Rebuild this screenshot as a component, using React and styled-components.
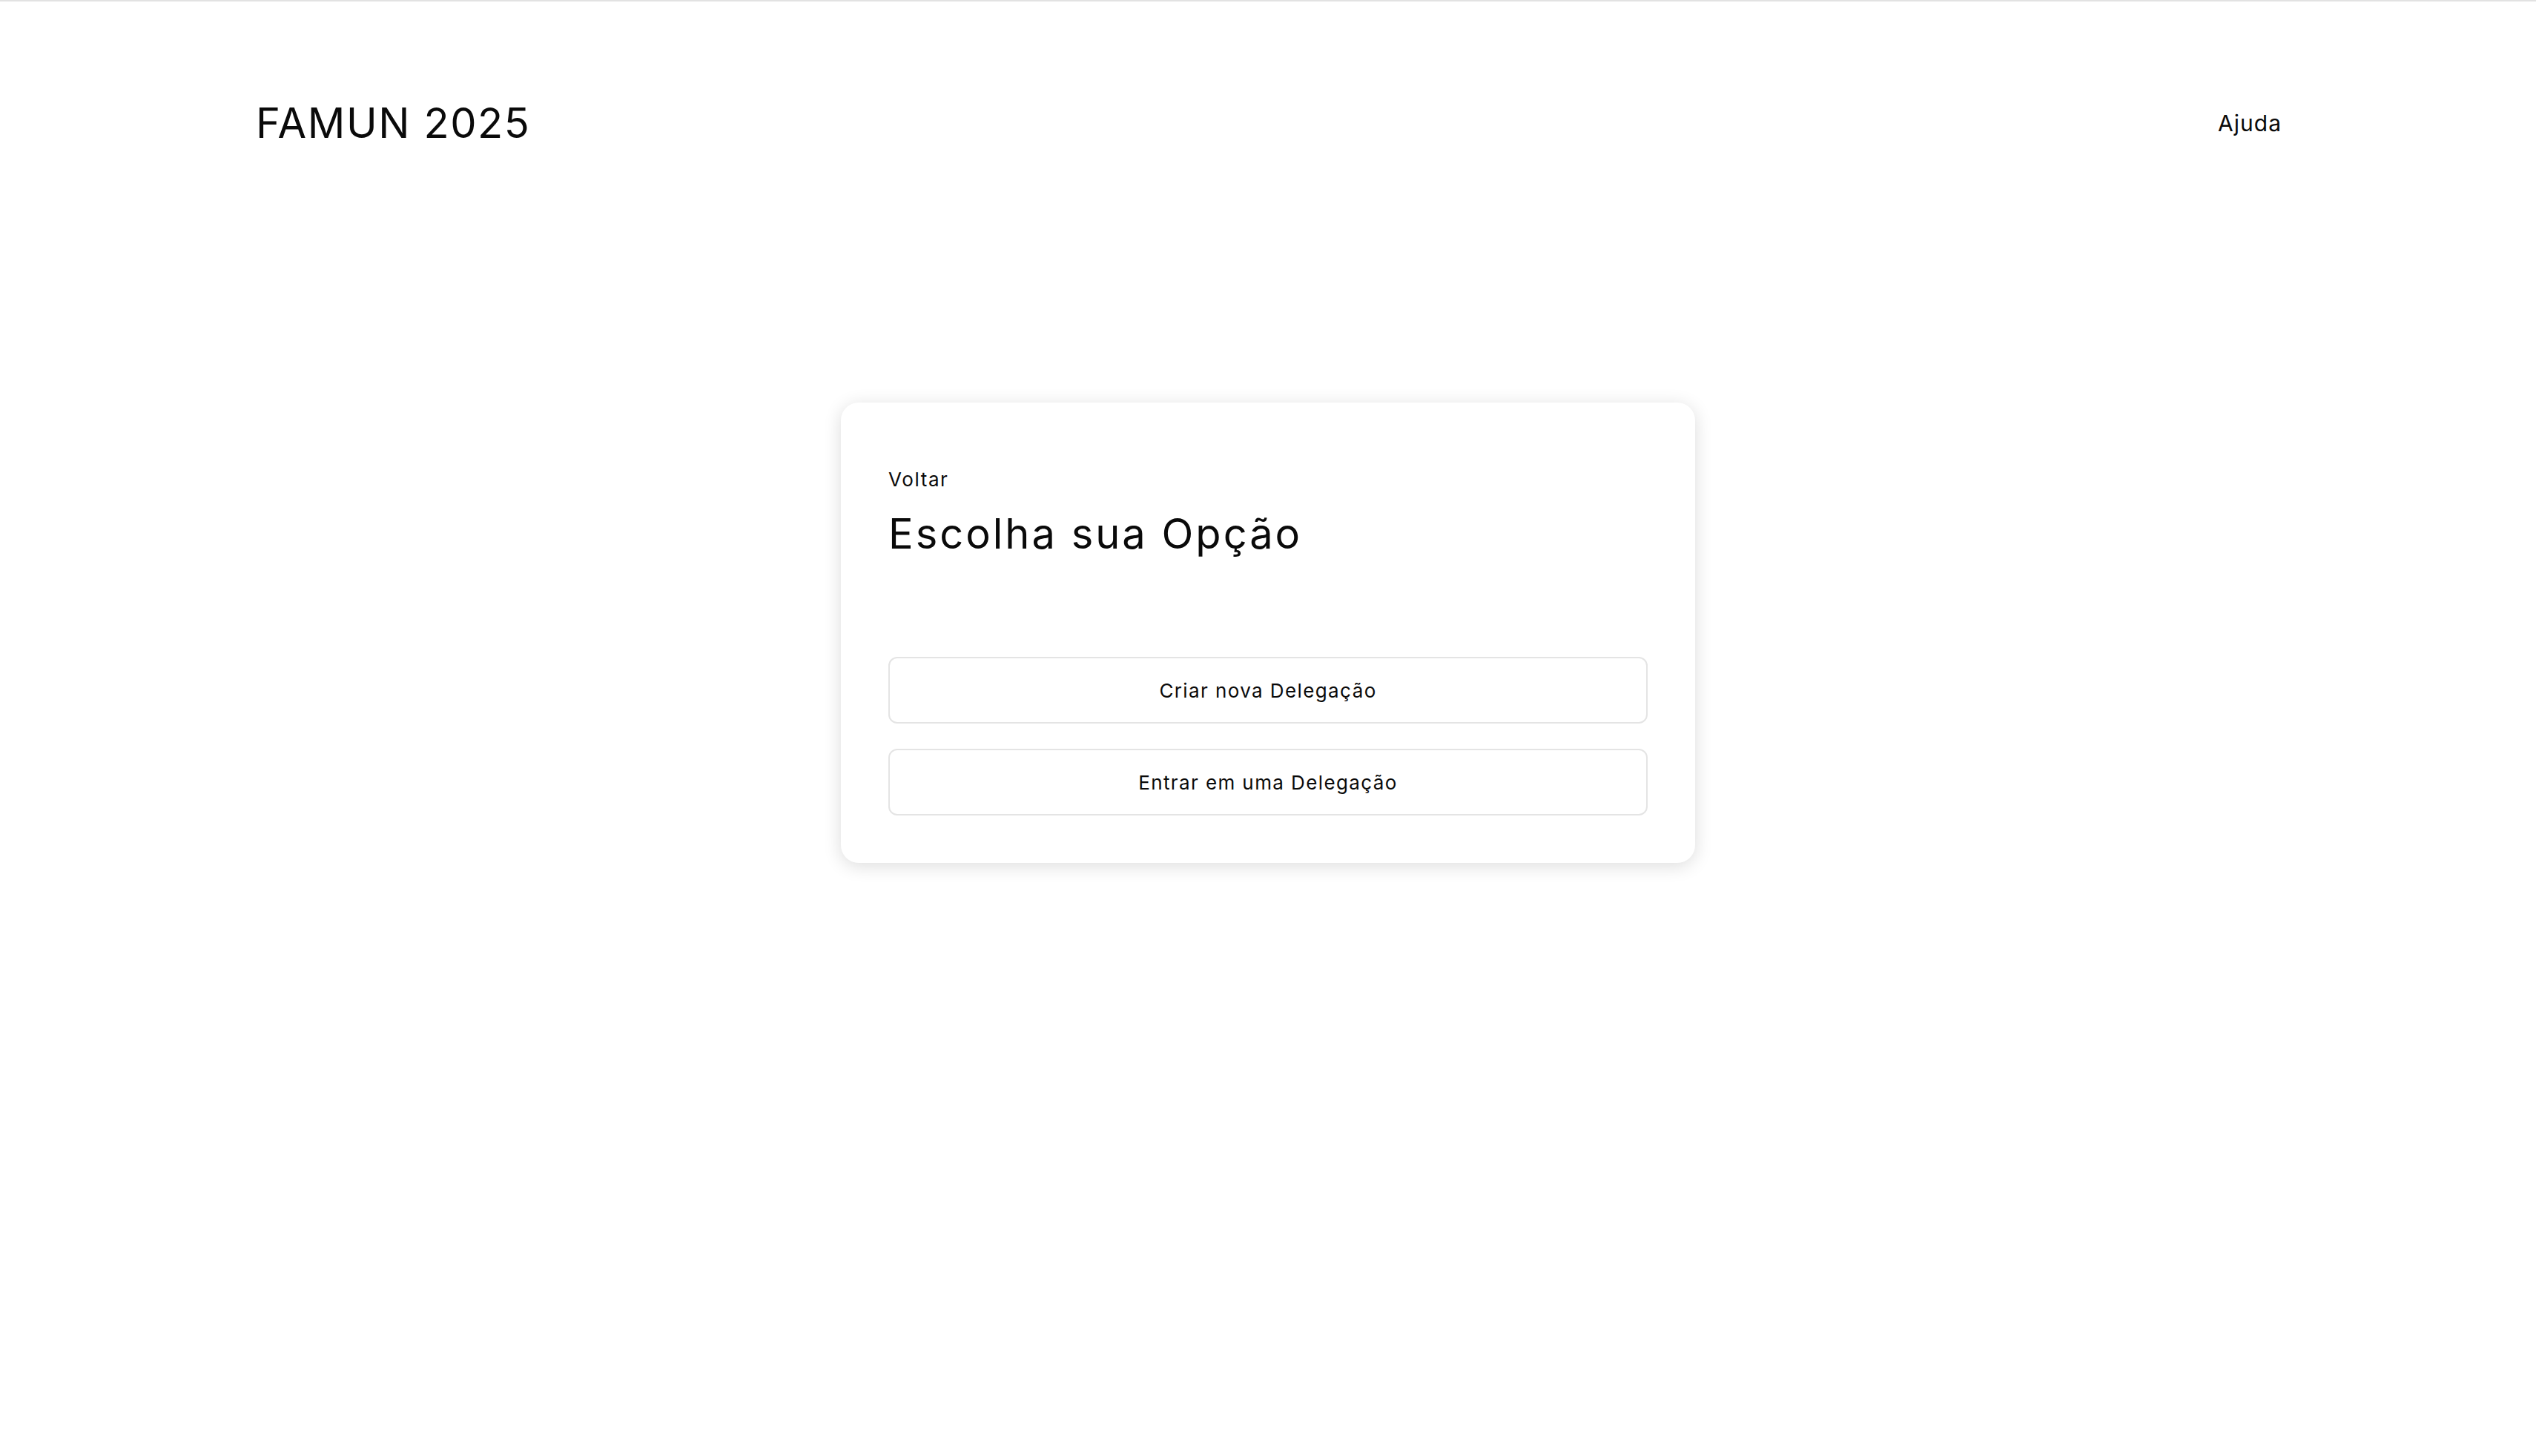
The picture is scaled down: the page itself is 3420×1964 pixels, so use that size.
import React from "react";
import styled, { createGlobalStyle } from "styled-components";

const Global = createGlobalStyle`
  html, body { margin: 0; padding: 0; background: #ffffff; }
  body {
    font-family: Inter, "Open Sans", "Liberation Sans", sans-serif;
    color: #0a0a0a;
    border-top: 2px solid #e2e2e2;
  }
  * { box-sizing: border-box; }
`;

const Page = styled.div`
  min-height: 1962px;
  display: flex;
  flex-direction: column;
`;

const Header = styled.header`
  height: 328px;
  padding: 0 343px 0 345px;
  display: flex;
  align-items: center;
  justify-content: space-between;
`;

const Brand = styled.div`
  font-size: 56px;
  line-height: 1;
  font-weight: 400;
  letter-spacing: 1.6px;
`;

const NavLink = styled.a`
  font-size: 30px;
  line-height: 1;
  letter-spacing: 1px;
  color: #0a0a0a;
  text-decoration: none;
  cursor: pointer;
`;

const Main = styled.main`
  display: flex;
  justify-content: center;
  padding-top: 213px;
`;

const Card = styled.section`
  width: 1152px;
  padding: 64px 64px 64px;
  background: #fff;
  border-radius: 24px;
  box-shadow: 0 4px 24px rgba(0, 0, 0, 0.14);
  display: flex;
  flex-direction: column;
`;

const Back = styled.a`
  margin-top: 24px;
  font-size: 26px;
  line-height: 1.21;
  letter-spacing: 1.6px;
  color: #0a0a0a;
  cursor: pointer;
`;

const Title = styled.h1`
  margin: 25px 0 0;
  font-size: 56px;
  line-height: 1.21;
  font-weight: 400;
  letter-spacing: 3px;
`;

const Options = styled.div`
  margin-top: 131px;
  display: flex;
  flex-direction: column;
  gap: 34px;
`;

const OptionButton = styled.button`
  height: 90px;
  width: 100%;
  background: #fff;
  border: 2px solid #e4e4e4;
  border-radius: 12px;
  font-family: inherit;
  font-size: 26px;
  letter-spacing: 1.4px;
  color: #0a0a0a;
  cursor: pointer;
`;

export default function App() {
  return (
    <>
      <Global />
      <Page>
        <Header>
          <Brand>FAMUN 2025</Brand>
          <NavLink>Ajuda</NavLink>
        </Header>
        <Main>
          <Card>
            <Back>Voltar</Back>
            <Title>Escolha sua Opção</Title>
            <Options>
              <OptionButton>Criar nova Delegação</OptionButton>
              <OptionButton>Entrar em uma Delegação</OptionButton>
            </Options>
          </Card>
        </Main>
      </Page>
    </>
  );
}
